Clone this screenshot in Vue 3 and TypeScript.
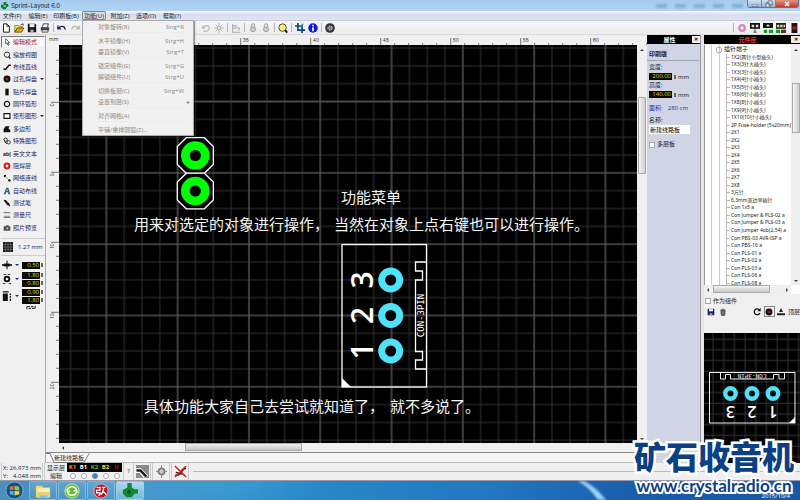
<script setup lang="ts">
import { ref } from 'vue'

interface MenuItem { label: string; width: string; open?: boolean }
interface DropItem { label: string; key?: string; sub?: boolean; group?: boolean }
interface Tool { label: string; icon: string; more?: boolean }

const icons: Record<string, string> = {
  pointer: '<path d="M4 1v8l2-2 1.500 4 1.500-.7L7.500 7H10z" fill="#fff" stroke="#222" stroke-width="1"/>',
  zoom: '<circle cx="6" cy="5.500" r="4" fill="#fff" stroke="#222" stroke-width="1.400"/><path d="M8.500 8.500 11 11.500" stroke="#222" stroke-width="2"/>',
  track: '<path d="M1.500 9.500H4L9 3.500h2" fill="none" stroke="#111" stroke-width="2.200" stroke-linecap="round"/>',
  via: '<circle cx="6" cy="6" r="5.200" fill="#111"/><circle cx="6" cy="6" r="2" fill="#a51c1c"/>',
  smd: '<path d="M3.500 1h5v10h-5z" fill="#111"/>',
  ring: '<circle cx="6" cy="6" r="4" fill="#fff" stroke="#111" stroke-width="1.900"/>',
  rect: '<path d="M1.500 2.500h9v7h-9z" fill="#fff" stroke="#111" stroke-width="1.700"/>',
  poly: '<path d="M1 6 4 2h6L8 5l3 3v3H1z" fill="#111"/>',
  special: '<circle cx="4" cy="4" r="2.500" fill="none" stroke="#222" stroke-width="1.500"/><circle cx="8.500" cy="8" r="2.500" fill="none" stroke="#222" stroke-width="1.300"/><path d="M2 7l4 3" stroke="#222" stroke-width="1.500"/>',
  text: '<text x="0" y="9" font-family="Liberation Sans, sans-serif" font-size="8" font-weight="700" fill="#111">ab|</text>',
  mask: '<circle cx="6" cy="6" r="3.600" fill="#fff" stroke="#e31515" stroke-width="3"/>',
  net: '<circle cx="3" cy="3" r="1.800"/><circle cx="9.500" cy="9.500" r="1.800"/><path d="M3 3l6.500 6.500" stroke="#777" stroke-width="1"/>',
  auto: '<path d="M1 11 5 1h3l3 10H8L7.500 8h-3L4 11zM5 6h2l-.7-3z" fill="#2f6183"/>',
  probe: '<path d="M1 1l3 .5 5 5 2 5-5-3-4-5z" fill="#111"/>',
  ruler: '<path d="M1 2.500h10M1 9.500h10M3 7v2M6 7v2M9 7v2" stroke="#555" stroke-width="1.300"/>',
  photo: '<path d="M1 3.500h2.500L5 2h3l1 1.500h2V10H1z" fill="#555"/><circle cx="6.500" cy="6.500" r="2" fill="#ccc" stroke="#333"/>',
  page: '<path d="M3 1h4l3 3v7H3z" fill="#fff" stroke="#222" stroke-width="1.200"/><path d="M7 1v3h3" fill="none" stroke="#222"/>',
  folder: '<path d="M1 3h4l1 1h4v2H4l-3 5z" fill="#ffe98a" stroke="#6a5a00" stroke-width=".8"/><path d="M4 6h8l-3 5H1z" fill="#e0b000" stroke="#3c3200" stroke-width=".8"/><path d="M8 2l3-1v2" fill="none" stroke="#222"/>',
  disk: '<path d="M1 1h9l1 1v9H1z" fill="#15151c"/><path d="M3 1h6v4H3z" fill="#e8e8ee"/><path d="M4 8h4v3H4z" fill="#aaa"/>',
  bluedisk: '<path d="M1 1h9l1 1v9H1z" fill="#1b1f72"/><path d="M3 1h6v4H3z" fill="#e8e8ee"/><path d="M4 8h4v3H4z" fill="#aab"/>',
  printer: '<path d="M3 5l1-4h6L9 5" fill="#fff" stroke="#222"/><path d="M1 5h10v4H1z" fill="#444"/><path d="M2.500 8h7v3h-7z" fill="#ddd" stroke="#222" stroke-width=".8"/>',
  undo: '<path d="M1 3v4h4M1.500 6.500C4 3 9 3 10 8" fill="none" stroke="#1c1c5a" stroke-width="1.500"/>',
  redo: '<path d="M11 3v4H7M10.500 6.500C8 3 3 3 2 8" fill="none" stroke="#bbb" stroke-width="1.500"/>',
  rotate: '<path d="M2 3v3h3M2.500 6C4 2 10 2 10 6s-5 5-7 3" fill="none" stroke="#bdbdbd" stroke-width="1.500"/>',
  burst: '<circle cx="6" cy="6" r="2.200" fill="none" stroke="#aaa" stroke-width="1.300"/><path d="M6 0v3M6 9v3M0 6h3M9 6h3M2 2l2 2M8 8l2 2M10 2 8 4M4 8l-2 2" stroke="#aaa"/>',
  align: '<path d="M2 1v10h9M2 3h4v3H2M7 6h3v3" fill="none" stroke="#aaa" stroke-width="1.300"/>',
  lock: '<path d="M4 5V3a2 2 0 0 1 4 0v2" fill="none" stroke="#aaa" stroke-width="1.400"/><circle cx="6" cy="7.500" r="3" fill="#ccc" stroke="#999"/>',
  find: '<circle cx="5.500" cy="5.500" r="4.500" fill="#ffee70" stroke="#333" stroke-width="1"/><path d="M8.500 8.500 11 11.500" stroke="#111" stroke-width="2.200"/>',
  crop: '<path d="M3.500 0v8.500H12M0 3.500h8.500V12" fill="none" stroke="#0b3f70" stroke-width="1.900"/><path d="M5 5l5-4" stroke="#18a0a0" stroke-width="1.500"/>',
  info: '<circle cx="6" cy="6" r="5.700" fill="#0c18d8"/><path d="M6 2v2M6 5v5" stroke="#fff" stroke-width="2"/>',
  disc: '<circle cx="6" cy="6" r="5.800" fill="#333"/><circle cx="6" cy="6" r="2.500" fill="#777" stroke="#ccc" stroke-width="1.300" stroke-dasharray="2 1"/>',
  pink: '<circle cx="6" cy="6" r="3.400" fill="#fff" stroke="#dd80bd" stroke-width="2.800"/>',
  pane1: '<path d="M0 0h12v7H0z" fill="#111"/><path d="M2 2h3v3H2zM7 2h3v3H7z" fill="#ddd"/><path d="M6 7v4M4 11h4" stroke="#333"/>',
  pane2: '<path d="M0 0h12v6H0z" fill="#111"/><path d="M4 3h4M6 1v4" stroke="#ddd"/><path d="M1 8h4v4H1zM7 8h5v4H7z" fill="#139a2b"/>',
  pane3: '<path d="M0 0h12v7H0z" fill="#222"/><path d="M1 2h3v3H1zM5 2h3v3H5zM9 2h2v3H9z" fill="#dcd28a"/><path d="M0 8h5v4H0z" fill="#139a2b"/><path d="M6 8h6v4H6z" fill="#7a2222"/>',
  pane4: '<path d="M3 0h7v12H3z" fill="#151515"/><path d="M4 4h5v4H4z" fill="#b0121b"/>',
  trash: '<path d="M2 3h8M5 1.500h2M3 4l.6 7h5L9 4z" fill="#777" stroke="#333" stroke-width="1.200"/>',
  turn: '<path d="M10 3a4.500 4.500 0 1 0 .5 4.500" fill="none" stroke="#111" stroke-width="1.900"/><path d="M11.500 0v5h-5z" fill="#111"/>',
  flip: '<path d="M6 0l3 6H3zM0 8h12v3H0z" fill="#222"/>',
  line: '<path d="M0 5h12v2H0z" fill="#111"/><path d="M6 1v10" stroke="#111" stroke-width="1.300" /><path d="M2.500 4.300h7v3.400h-7z" fill="#111"/>',
  padsize: '<circle cx="6" cy="6" r="2.800" fill="none" stroke="#111" stroke-width="2.300"/><path d="M2 .5h3M7 .5h3M1 11.500h3M8 11.500h3" stroke="#111" stroke-width="1"/>',
  smdsize: '<path d="M1 3h6v9H1z" fill="#111"/><path d="M1 1h7M10 3v2M10 6v2M10 9v3" stroke="#111" stroke-width="1.500"/>',
  grid: '<path d="M0 0h12v12H0z" fill="#1c1c1c"/><path d="M3 0v12M6 0v12M9 0v12M0 3h12M0 6h12M0 9h12" stroke="#777" stroke-width=".7"/>',
}

const menus: MenuItem[] = [
  { label: '文件(F)', width: 'm' }, { label: '编辑(E)', width: 'm' }, { label: '印刷板(B)', width: 'l' },
  { label: '功能(U)', width: 'm', open: true }, { label: '附加(Z)', width: 'm' }, { label: '选项(O)', width: 'm' }, { label: '帮助(?)', width: 'm' },
]
const drop: DropItem[] = [
  { label: '对象旋转(R)', key: 'Strg+R' },
  { label: '水平镜像(H)', key: 'Strg+H', group: true },
  { label: '垂直镜像(V)', key: 'Strg+T' },
  { label: '锁定组件(G)', key: 'Strg+G', group: true },
  { label: '解锁组件(U)', key: 'Strg+U' },
  { label: '切换板层(C)', key: 'Strg+W', group: true },
  { label: '设置到层(S)', sub: true },
  { label: '对齐网格(A)', group: true },
  { label: '平铺/重排圆弧(Z)...', group: true },
]
const barLeft = ['page', 'folder', 'disk', 'printer', '|', 'undo', 'redo']
const barMid = ['rotate', 'burst', '|', 'align', '|', 'lock', 'lock', '|', 'find', '|', 'crop', 'info', '|', 'disc']
const barRight = ['|', 'pink', 'pane1', 'pane2', 'pane3', 'pane4']
const tools: Tool[] = [
  { label: '编辑模式', icon: 'pointer' }, { label: '缩放视图', icon: 'zoom' }, { label: '布线直线', icon: 'track' },
  { label: '过孔焊盘', icon: 'via', more: true }, { label: '贴片焊盘', icon: 'smd' }, { label: '圆环弧形', icon: 'ring' },
  { label: '矩形图形', icon: 'rect', more: true }, { label: '多边形', icon: 'poly' }, { label: '特殊图形', icon: 'special' },
  { label: '英文文本', icon: 'text' }, { label: '阻焊层', icon: 'mask' }, { label: '网络连线', icon: 'net' },
  { label: '自动布线', icon: 'auto' }, { label: '测试笔', icon: 'probe' }, { label: '测量尺', icon: 'ruler' }, { label: '照片预览', icon: 'photo' },
]
const sizes = [
  { icon: 'line', name: '线宽', values: ['0.50'] },
  { icon: 'padsize', name: '焊盘', values: ['1.80', '0.80'] },
  { icon: 'smdsize', name: '贴片', values: ['0.90', '1.80'] },
]
const parts = [
  '1X2(两针小型插头)', '1X3(3针大插头)', '1X3(3针小插头)', '1X4(4针小插头)', '1X5(5针小插头)', '1X6(6针小插头)', '1X8(8针小插头)',
  '1X9(9针小插头)', '1X10(10针小插头)', '2P Fuse-holder (5x20mm)', '2X1', '2X2', '2X3', '2X4', '2X5', '2X6', '2X7', '2X8', '3方针',
  '6.3mm宽边单插针', 'Con 1x5 a', 'Con Jumper & PLS-02 a', 'Con Jumper & PLS-03 a', 'Con Jumper 4ob(2,54) a', 'Con PBS-03 AVR-ISP a',
  'Con PBS-16 a', 'Con PLS-01 a', 'Con PLS-02 a', 'Con PLS-03 a', 'Con PLS-06 a', 'Con PLS-08 a',
]
const layers = [
  { name: 'K1', color: '#ff8a1c' }, { name: 'B1', color: '#ffffff' }, { name: 'K2', color: '#21d63a' },
  { name: 'B2', color: '#f3e53a' }, { name: 'U', color: '#c01822' },
]
const activeLayer = ref('K2')
const boardWidth = ref('200.00')
const boardHeight = ref('140.00')
const boardName = ref('新建线路板')
// One ruler tick per millimetre; every fifth one carries a number.
const hTicks = Array.from({ length: 34 }, (_, i) => ({ x: 184.7 + i * 14, label: i % 5 === 4 ? String(31 + i) : '' }))
const vTicks = Array.from({ length: 28 }, (_, i) => ({ y: 60.3 + i * 14, label: i >= 3 && (i - 3) % 5 === 0 ? String(i - 3) : '' }))
const pads = [{ n: '3', y: 280 }, { n: '2', y: 315.5 }, { n: '1', y: 351 }]
const miniPads = [{ n: '3', x: 730.5 }, { n: '2', x: 752 }, { n: '1', x: 773 }]
</script>

<template>
  <div class="app">
    <header class="title">
      <svg class="logo" viewBox="0 0 12 12"><path d="M4 0h4v3h3v4H9l-2 4H3L0 8V4h4z" fill="#127a25" /><circle cx="5.5" cy="6" r="1.8" fill="#6ae07a" /></svg>
      <span>Sprint-Layout 6.0</span>
      <span class="ghosts"><i></i><i></i><i></i><i></i><i></i></span>
      <div class="winbtns">
        <button aria-label="最小化"><svg viewBox="0 0 12 8"><path d="M3 5h6v1.500H3z" fill="#fff" stroke="#456" stroke-width=".6" /></svg></button>
        <button aria-label="还原"><svg viewBox="0 0 12 8"><path d="M5 1h4v4H5zM3 3h4v4H3z" fill="#fff" stroke="#456" stroke-width=".8" /></svg></button>
        <button class="close" aria-label="关闭"><svg viewBox="0 0 12 8"><path d="M4 2l4 4M8 2 4 6" stroke="#fff" stroke-width="1.5" /></svg></button>
      </div>
    </header>

    <nav class="menubar">
      <div v-for="m in menus" :key="m.label" class="menuslot" :class="m.width">
        <button class="menu" :class="{ open: m.open }">{{ m.label }}</button>
        <div v-if="m.open" class="drop">
          <button v-for="d in drop" :key="d.label" disabled class="dropitem" :class="{ group: d.group }">
            <span>{{ d.label }}</span><span v-if="d.key" class="key">{{ d.key }}</span><span v-if="d.sub" class="sub">▸</span>
          </button>
        </div>
      </div>
    </nav>

    <div class="toolbar">
      <div class="group-left">
        <template v-for="(n, i) in barLeft" :key="i"><i v-if="n === '|'" class="sep"></i><button v-else :aria-label="n"><svg viewBox="0 0 12 12" v-html="icons[n]" /></button></template>
      </div>
      <div class="group-mid">
        <template v-for="(n, i) in barMid" :key="i"><i v-if="n === '|'" class="sep"></i><button v-else :aria-label="n"><svg viewBox="0 0 12 12" v-html="icons[n]" /></button></template>
      </div>
      <div class="group-right">
        <template v-for="(n, i) in barRight" :key="i"><i v-if="n === '|'" class="sep"></i><button v-else :aria-label="n"><svg viewBox="0 0 12 12" v-html="icons[n]" /></button></template>
      </div>
    </div>

    <main class="main">
      <aside class="left">
        <div class="tools">
          <button v-for="(t, i) in tools" :key="t.label" class="tool" :class="{ active: i === 0 }">
            <svg viewBox="0 0 12 12" v-html="icons[t.icon]" /><span>{{ t.label }}</span><i v-if="t.more" class="caret"></i>
          </button>
        </div>
        <button class="gridsize"><svg viewBox="0 0 12 12" v-html="icons.grid" /><span>1.27 mm</span></button>
        <div class="sizes">
          <div v-for="s in sizes" :key="s.name" class="size">
            <svg viewBox="0 0 12 12" v-html="icons[s.icon]" /><i class="caret blue"></i>
            <div class="vals"><label v-for="(v, i) in s.values" :key="i"><input type="text" :value="v" :aria-label="s.name + (i + 1)" /><i class="spin"></i></label></div>
          </div>
          <svg class="swap" viewBox="0 0 12 6"><path d="M1 5V2h4M7 4h4V1M3 4h3M6 2h3" fill="none" stroke="#222" stroke-width="1.2" /></svg>
        </div>
      </aside>

      <section class="board">
        <div class="work">
          <span class="unit">mm</span>
          <svg class="hruler">
            <g transform="translate(-59 -35)" stroke="#777">
              <path v-for="t in hTicks" :key="t.x" :d="`M${t.x} ${t.label ? 38 : 43}V45`" />
            </g>
            <g transform="translate(-59 -35)" font-size="5" fill="#333">
              <text v-for="t in hTicks" :key="t.x" :x="t.x + 2" y="42">{{ t.label }}</text>
            </g>
          </svg>
          <svg class="vruler">
            <g transform="translate(-46 -45)" stroke="#777">
              <path v-for="t in vTicks" :key="t.y" :d="`M${t.label ? 51 : 56} ${t.y}H59`" />
            </g>
            <g transform="translate(-46 -45)" font-size="5" fill="#333">
              <text v-for="t in vTicks" :key="t.y" text-anchor="end" :transform="`translate(54 ${t.y + 1}) rotate(-90)`">{{ t.label }}</text>
            </g>
          </svg>
          <svg class="canvas">
            <defs>
              <pattern id="minor" x="2.8" y="12" width="17.825" height="17.825" patternUnits="userSpaceOnUse"><path d="M8.900 0V17.825M0 8.900H17.825" stroke="#323232" fill="none" /></pattern>
              <pattern id="major" x="11.7" y="20.9" width="71.3" height="71.3" patternUnits="userSpaceOnUse"><path d="M35.650 0V71.300M0 35.650H71.300" stroke="#5c5c5c" fill="none" /></pattern>
            </defs>
            <rect width="100%" height="100%" fill="#000" />
            <rect width="100%" height="100%" fill="url(#minor)" />
            <rect width="100%" height="100%" fill="url(#major)" />
            <path d="M0 56.500H3000" stroke="#a02c30" stroke-width="1" />
            <g transform="translate(-59 -45)">
              <g v-for="y in [155.5, 191]" :key="y" :transform="`translate(195.3 ${y})`">
                <path d="M-9-17.800H9L18-9V9L9 17.800H-9L-18 9V-9z" fill="#000" stroke="#fff" stroke-width="1.3" />
                <circle r="14.3" fill="#0f0" /><circle r="5.6" fill="#000" />
              </g>
              <g fill="none" stroke="#fff" stroke-width="1.3">
                <rect x="342" y="244.5" width="84.5" height="142.5" />
                <path d="M426.500 262H415.500V271H422.500V280H415.500V351.500H422.500V360H415.500V369H426.500" />
              </g>
              <path d="M342 378l9 9h-9z" fill="#fff" />
              <g v-for="p in pads" :key="p.n">
                <circle cx="390.7" :cy="p.y" r="9" fill="#000" stroke="#4fe3fb" stroke-width="7" />
                <text class="padno" text-anchor="middle" :transform="`translate(373 ${p.y}) rotate(-90)`">{{ p.n }}</text>
              </g>
              <text class="partname" text-anchor="middle" transform="translate(424 315.5) rotate(-90)">CON-3PIN</text>
              <g class="caption">
                <text x="341" y="203">功能菜单</text>
                <text y="230"><tspan x="134">用来对选定的对象进行操作，</tspan><tspan x="334">当然在对象上点右键也可以进行操作。</tspan></text>
                <text y="412"><tspan x="144">具体功能大家自己去尝试就知道了，</tspan><tspan x="390">就不多说了。</tspan></text>
              </g>
            </g>
          </svg>
          <div class="vscroll"><i class="tri up"></i><b></b><i class="tri down"></i></div>
          <div class="hscroll"><i class="tri left-tri"></i><b></b></div>
        </div>
        <div class="tabs"><svg viewBox="0 0 48 10"><path d="M0 .5H4L8 9.500H38L43 .5" fill="#fafafa" stroke="#777" stroke-width="1" /></svg><button>新建线路板</button></div>
      </section>

      <aside class="props">
        <div class="head"><span>属性</span><button aria-label="关闭属性">✕</button></div>
        <h2>印刷版</h2>
        <div class="fields">
          <label for="bw">宽度:</label>
          <div class="num"><input id="bw" v-model="boardWidth" type="text" /><i class="spin"></i><span>mm</span></div>
          <label for="bh">高度:</label>
          <div class="num"><input id="bh" v-model="boardHeight" type="text" /><i class="spin"></i><span>mm</span></div>
          <p class="area"><span>面积:</span><span>280 cm</span></p>
          <label for="bn">名称:</label>
          <input id="bn" v-model="boardName" class="name" type="text" />
          <label class="check"><input type="checkbox" /><span>多层板</span></label>
        </div>
      </aside>

      <aside class="lib">
        <div class="head red"><span>元件库</span><button aria-label="关闭元件库">✕</button></div>
        <div class="treebox">
          <div class="tree">
            <ul><li class="root">插针端子</li><li v-for="(p, i) in parts" :key="i">{{ p }}</li></ul>
          </div>
          <div class="treev"><i class="tri up"></i><b></b><i class="tri down"></i></div>
          <div class="treeh"><i class="tri left-tri"></i><b></b><i class="tri right-tri"></i></div>
        </div>
        <label class="check"><input type="checkbox" /><span>作为组件</span></label>
        <div class="libtools">
          <button aria-label="保存"><svg viewBox="0 0 12 12" v-html="icons.bluedisk" /></button>
          <button aria-label="删除"><svg viewBox="0 0 12 12" v-html="icons.trash" /></button>
          <i class="grow"></i>
          <button aria-label="旋转"><svg viewBox="0 0 12 12" v-html="icons.turn" /></button>
          <button aria-label="焊盘" class="on"><svg viewBox="0 0 12 12" v-html="icons.via" /></button>
          <button aria-label="翻转"><svg viewBox="0 0 12 12" v-html="icons.flip" /></button>
          <span>顶层</span>
        </div>
        <svg class="preview">
          <defs><pattern id="pgrid" x="4" y="1" width="10.7" height="10.7" patternUnits="userSpaceOnUse"><path d="M5 0V10.700M0 5H10.700" stroke="#353535" fill="none" /></pattern></defs>
          <rect width="100%" height="100%" fill="#000" /><rect width="100%" height="100%" fill="url(#pgrid)" />
          <g transform="translate(-704 -333)">
            <g fill="none" stroke="#eee"><rect x="709.5" y="372.5" width="85.5" height="50.5" /><path d="M720.500 372.500V379H725.500V374.500H730.500V379H773.500V374.500H779V379H784.500V372.500" /></g>
            <path d="M795 417v6h-6z" fill="#fff" />
            <g v-for="p in miniPads" :key="p.n">
              <circle :cx="p.x" cy="393.5" r="5.2" fill="#000" stroke="#4fe3fb" stroke-width="4.4" />
              <text class="minino" text-anchor="middle" :transform="`translate(${p.x} 405.5) rotate(180)`">{{ p.n }}</text>
            </g>
            <text class="mininame" text-anchor="middle" transform="translate(752 373.5) rotate(180)">CON-3PIN</text>
          </g>
        </svg>
      </aside>
    </main>

    <footer class="status">
      <div class="coords"><span>X:</span><span>26.973 mm</span><span>Y:</span><span>4.048 mm</span></div>
      <div class="layers">
        <span>显示层</span><b v-for="l in layers" :key="l.name" :style="{ color: l.color }">{{ l.name }}</b>
        <span>编辑</span><input v-for="l in layers" :key="l.name" v-model="activeLayer" type="radio" name="layer" :value="l.name" :aria-label="l.name" />
      </div>
      <span class="q">?</span>
      <button aria-label="橡皮筋"><svg viewBox="0 0 14 14"><path d="M0 0h14v14H0z" fill="#8a8a8a" /><path d="M0 4h5l8 8M0 8h4l5 6" fill="none" stroke="#fff" stroke-width="1.2" /><path d="M1 6h4l6 6" fill="none" stroke="#111" stroke-width="2.2" /></svg></button>
      <button aria-label="捕捉"><svg viewBox="0 0 14 14"><circle cx="7" cy="7" r="3.3" fill="#ccc" stroke="#777" stroke-width="1.8" /><path d="M7 0v4M7 10v4M1 7h3M10 7h3" stroke="#888" /></svg></button>
      <button aria-label="连线关闭"><svg viewBox="0 0 14 14"><path d="M1 11h4l6-7h2M2 8l8 2" fill="none" stroke="#222" stroke-width="1.4" /><path d="M1 1l12 12M13 1 1 13" stroke="#d11f1f" stroke-width="1.6" /></svg></button>
      <i class="hint"></i>
    </footer>

    <div class="taskbar">
      <button class="start" aria-label="开始"><svg viewBox="0 0 20 20"><circle cx="10" cy="10" r="9" fill="#174e80" stroke="#77b4dc" /><path d="M5 6l4-1v4.500H5z" fill="#e9652c" /><path d="M10 5l5 1v4l-5-.5z" fill="#8bc63f" /><path d="M5 10.500h4V15l-4-1z" fill="#48b3ea" /><path d="M10 10.500l5 .2V14l-5 1.200z" fill="#ffd13b" /></svg></button>
      <button class="task" aria-label="文件夹"><svg viewBox="0 0 20 18"><path d="M2 3h7l1 2h8v11H2z" fill="#f3d774" /><path d="M4 6h13v8H4z" fill="#fdf3b8" /><path d="M3 10h15l-1 7H4z" fill="#ecd07a" /><path d="M6 14h9v3H6z" fill="#7fc4e8" /></svg></button>
      <button class="task" aria-label="浏览器"><svg viewBox="0 0 20 18"><circle cx="10" cy="9" r="8" fill="#67bd2c" stroke="#c8efa6" /><path d="M5 8c1-5 9-5 10 0M15 10c-1 5-9 5-10 0M4 7l1 3 3-1M16 11l-1-3-3 1" fill="none" stroke="#fff" stroke-width="1.7" /></svg></button>
      <button class="task" aria-label="词典"><svg viewBox="0 0 20 18"><circle cx="10" cy="9" r="8" fill="#b81426" stroke="#f0b6bc" /><path d="M5 5h4v3H5v3h4q0 3-2 3M11 5h4M13 5q0 5-3 8M12 9l4 4" fill="none" stroke="#fff" stroke-width="1.4" /></svg></button>
      <button class="task active" aria-label="Sprint-Layout"><svg viewBox="0 0 20 18"><path d="M7 0h5v5l3 2h4v5h-4l-3 4H6l-4-4V8l5-3z" fill="#128a2c" /><circle cx="9" cy="10" r="2.2" fill="#0a5418" /></svg></button>
      <svg class="beam" viewBox="0 0 60 19"><path d="M2 0Q14 7 22 19H30Q20 6 8 0z" fill="#9fd0f5" /></svg>
      <time>2015/10/4</time>
    </div>

    <div class="mark"><strong>矿石收音机</strong><a href="#">www.crystalradio.cn</a></div>
  </div>
</template>

<style>
body { margin: 0; }
</style>

<style scoped>
.app { position: relative; display: flex; flex-direction: column; height: 100vh; min-height: 440px; overflow: hidden; background: #f0f0f0; color: #222; font: 6px/8px "Open Sans", "Noto Sans CJK SC", sans-serif; }
.app * { box-sizing: border-box; }
button { display: flex; align-items: center; justify-content: center; padding: 0; border: 0; background: none; color: inherit; font: inherit; white-space: nowrap; }
input { margin: 0; padding: 0; border: 0; font: inherit; min-width: 0; }
i { font-style: normal; }
svg { display: block; flex: none; }
.tri { width: 0; height: 0; border: 2px solid transparent; align-self: center; justify-self: center; }
.tri.up { border-bottom-color: #444; border-top: 0; }
.tri.down { border-top-color: #444; border-bottom: 0; }
.left-tri { border-right-color: #444; border-left: 0; }
.right-tri { border-left-color: #444; border-right: 0; }

.title { display: flex; align-items: center; gap: 2px; flex: none; height: 11px; padding-left: 1px; background: linear-gradient(#a5caee, #b0d4f3); color: #123; }
.title > span:nth-child(2) { font-family: Inter, sans-serif; }
.logo { width: 8px; height: 8px; }
.ghosts { display: flex; gap: 8px; margin-left: auto; margin-right: 2px; filter: blur(1px); }
.ghosts i { width: 11px; height: 4px; background: #7b9cbc; opacity: .65; }
.winbtns { display: flex; align-self: flex-start; margin-right: 1px; height: 8px; border: 1px solid #5c7894; border-top: 0; border-radius: 0 0 3px 3px; overflow: hidden; }
.winbtns button { width: 14px; background: linear-gradient(#cfe2f4, #94b3d2); border-right: 1px solid #6d88a3; }
.winbtns .close { width: 22px; background: linear-gradient(#e59383, #c2392a); border: 0; }
.winbtns svg { width: 12px; height: 8px; }

.menubar { display: flex; gap: 2px; flex: none; height: 10px; background: linear-gradient(#fdfdfe, #d7dded 40%, #dfe5f2); border-bottom: 1px solid #c5cbd9; }
.menuslot { position: relative; display: flex; }
.m { width: 24px; }
.l { width: 28px; }
.menu { flex: 1; border: 1px solid transparent; }
.menu.open { border-color: #7c8798; border-radius: 1px; background: #d6deec; }
.drop { position: absolute; z-index: 5; top: 9px; left: 0; width: 112px; padding: 0 9px 0 15px; background: #f1f1f1; border: 1px solid #aaa; box-shadow: 1px 1px 1px #0006; color: #8b8b8b; }
.dropitem { display: flex; justify-content: space-between; width: 100%; height: 11px; }
.dropitem.group { height: 14px; padding-top: 3px; border-top: 1px solid #ececec; }
.dropitem .sub { margin-right: -6px; }

.toolbar { display: grid; grid-template-columns: 200px 1fr auto; flex: none; height: 14px; background: linear-gradient(#f5f6f8, #ececec); border-bottom: 1px solid #dadada; }
.toolbar > div { display: flex; align-items: center; gap: 1px; }
.toolbar button { width: 12px; height: 12px; }
.toolbar svg { width: 10px; height: 10px; }
.sep { width: 1px; height: 9px; margin: 0 1px; background: #b5b5b5; }

.main { display: flex; flex: 1; min-height: 0; }
.left { display: flex; flex-direction: column; width: 46px; flex: none; padding: 1px 1px 0; }
.tools { display: grid; grid-auto-rows: 1fr; height: 198px; }
.tool { justify-content: flex-start; gap: 2px; padding-left: 1px; border: 1px solid transparent; color: #29295c; }
.tool.active { border-color: #777 #eee #eee #777; background: #f8f8f8; color: #a01212; }
.tool svg { width: 8px; height: 8px; }
.tool span { width: 25px; text-align: left; }
.caret { width: 0; height: 0; border: 2px solid transparent; border-top-color: #222; border-bottom: 0; }
.caret.blue { border-top-color: #2222a0; }
.gridsize { justify-content: flex-start; gap: 5px; height: 18px; margin-top: 4px; padding-left: 2px; border-top: 1px solid #ccc; border-bottom: 1px solid #ccc; }
.gridsize svg { width: 10px; height: 10px; }
.sizes { display: flex; flex-direction: column; gap: 1px; padding: 4px 1px 0; }
.size { display: grid; grid-template-columns: 10px 4px 1fr; gap: 3px; align-items: center; min-height: 10px; }
.size svg { width: 10px; height: 10px; }
.vals label { display: flex; align-items: center; gap: 1px; height: 8px; }
.vals input, .num input { width: 18px; height: 7px; padding-right: 1px; background: #0a0a04; color: #d9d93c; text-align: right; line-height: 7px; }
.spin { width: 2px; height: 4px; background: #666; }
.swap { width: 10px; height: 5px; margin-left: 24px; }

.board { display: flex; flex-direction: column; flex: 1; min-width: 0; border-left: 1px solid #aaa; margin-left: -1px; }
.work { display: grid; flex: 1; min-height: 0; grid-template: 10px minmax(0, 1fr) 9px / 13px minmax(0, 1fr) 10px; border-bottom: 1px solid #888; background: #f0f0f0; }
.unit { line-height: 9px; padding-left: 3px; font-size: 5px; }
.hruler { grid-column: 2 / 4; width: 100%; height: 10px; font-family: Inter, sans-serif; }
.vruler { grid-row: 2 / 4; width: 13px; height: 100%; font-family: Inter, sans-serif; }
.canvas { width: 100%; height: 100%; min-height: 0; }
.caption { font: 15px "Noto Sans CJK SC", sans-serif; fill: #f6f6f6; }
.padno { font: 600 30px "Open Sans", sans-serif; fill: #fff; }
.partname { font: 9px "DejaVu Sans Mono", monospace; fill: #fff; }
.vscroll, .treev { display: grid; grid-template-rows: 9px 1fr 9px; justify-items: center; background: #efefef; }
.vscroll b { width: 8px; height: 77px; margin-top: 43px; border: 1px solid #a8a8a8; border-radius: 1px; background: linear-gradient(90deg, #f6f6f6, #cfcfcf); }
.hscroll { grid-column: 2 / 4; display: flex; padding-left: 3px; background: #f0f0f0; }
.hscroll b { width: 117px; height: 8px; margin-left: 121px; border: 1px solid #aaa; background: linear-gradient(#f2f2f2, #c6c6c6); }
.tabs { display: grid; flex: none; height: 10px; background: #f6f6f6; border-bottom: 1px solid #bbb; justify-items: start; }
.tabs > * { grid-area: 1 / 1; }
.tabs svg { width: 48px; height: 10px; }
.tabs button { height: 9px; margin-left: 8px; }

.props { width: 54px; flex: none; background: #d0d4e5; border-right: 1px solid #999; }
.head { display: grid; grid-template-columns: 1fr 8px; align-items: center; height: 9px; flex: none; background: #000; color: #fff; font-weight: 600; text-align: center; }
.head button { height: 7px; background: #eee; color: #000; font-size: 5px; line-height: 7px; }
.head.red { color: #e8323b; grid-template-columns: 1fr 9px; }
.props h2 { margin: 5px 1px 2px 0; padding: 0 2px 1px; border-bottom: 1px solid #9aa; font-size: 6px; line-height: 10px; font-weight: 700; }
.fields { display: flex; flex-direction: column; padding: 0 2px; }
.fields > label { height: 9px; line-height: 9px; }
.num { display: flex; align-items: center; gap: 2px; height: 9px; }
.num input { width: 23px; }
.area { display: flex; justify-content: space-between; margin: 5px 10px 4px 0; color: #2b2b9c; line-height: 8px; }
.name { width: 41px; height: 9px; padding-left: 1px; background: #fff; }
.check { display: flex; align-items: center; gap: 2px; }
.check input { appearance: none; width: 6px; height: 6px; border: 1px solid #a8a8a8; background: #fafafa; }
.fields > .check { margin-top: 6px; }

.lib { display: flex; flex-direction: column; width: 99px; flex: none; border-left: 3px solid #e4e4ea; }
.treebox { display: grid; flex: 1; min-height: 0; grid-template: minmax(0, 1fr) 9px / minmax(0, 1fr) 9px; margin-top: 1px; background: #fff; }
.tree { overflow: hidden; border-left: 1px solid #999; background: linear-gradient(90deg, transparent 6px, #ccc 6px 7px, transparent 7px 14px, #ccc 14px 15px, transparent 15px); }
.tree ul { display: grid; grid-auto-rows: 1fr; height: calc(100% + 2px); margin: 0; padding: 1px 0 0; list-style: none; font-family: "Noto Sans", "Noto Sans CJK SC", sans-serif; font-size: 5px; }
.tree li { display: flex; align-items: center; margin-left: 21px; border-left: 1px solid #bbb; white-space: nowrap; min-height: 0; line-height: 7px; }
.tree li::before { content: ""; width: 3px; margin-right: 1px; border-top: 1px solid #bbb; }
.tree .root { margin-left: 11px; border: 0; font-size: 6px; }
.tree .root::before { width: 4px; height: 4px; border: 1px solid #aaa; border-radius: 2px; margin-right: 2px; }
.treev b { width: 8px; height: 50px; margin-top: 29px; border: 1px solid #aaa; background: linear-gradient(90deg, #f4f4f4, #ccc); }
.treeh { display: flex; justify-content: space-between; background: #efefef; padding: 0 3px; }
.treeh b { width: 57px; height: 8px; margin-right: 12px; border: 1px solid #aaa; background: linear-gradient(#f4f4f4, #c8c8c8); }
.lib > .check { flex: none; height: 10px; margin-top: 2px; padding-left: 1px; }
.libtools { display: flex; align-items: center; gap: 1px; flex: none; height: 11px; padding-left: 1px; }
.libtools button { width: 11px; height: 11px; }
.libtools .on { border: 1px solid #888; }
.libtools svg { width: 8px; height: 8px; }
.grow { flex: 1; }
.preview { width: 100%; height: 130px; margin-top: 16px; }
.minino { font: 600 16px "Open Sans", sans-serif; fill: #fff; }
.mininame { font: 6px "DejaVu Sans Mono", monospace; fill: #eee; }

.status { display: flex; align-items: stretch; gap: 1px; flex: none; height: 18px; padding-left: 1px; background: #efefef; border-bottom: 1px solid #99a; }
.status > div, .status > button { border: 1px solid #ccc; border-width: 0 1px; }
.coords { display: grid; grid-template-columns: auto 1fr; align-content: center; width: 42px; padding: 0 1px; text-align: right; white-space: nowrap; }
.layers { display: grid; grid-template: 9px 8px / 22px repeat(5, 11px); align-items: center; justify-items: center; width: 80px; }
.layers b { width: 100%; height: 9px; background: #000; text-align: center; line-height: 9px; }
.layers input { appearance: none; width: 6px; height: 6px; border: 1px solid #aaa; border-radius: 50%; background: #fff; }
.layers input:checked { background: #2e86bd; border-color: #6b8ba0; }
.q { width: 7px; text-align: center; line-height: 17px; }
.status > button { width: 18px; }
.status button svg { width: 13px; height: 13px; }
.hint { flex: 1; align-self: center; height: 1px; margin-left: 3px; background: #bbb; }

.taskbar { position: relative; display: flex; align-items: stretch; gap: 1px; flex: none; height: 19px; background: radial-gradient(ellipse 90px 30px at 230px 0, #4ab1dc55, transparent), linear-gradient(90deg, #4b8dbb, #4699cb 18%, #2b8acb 36%, #2276c0 62%, #1a5cab 80%, #1757a5); }
.start { width: 28px; }
.start svg { width: 19px; height: 19px; }
.task { width: 28px; border: 1px solid #a5d0ea88; border-radius: 2px; background: linear-gradient(#8cc1e066, #5a9fce44); }
.task.active { background: linear-gradient(#cfeaf6cc, #8fcbe699); }
.task svg { width: 18px; height: 16px; }
.beam { position: absolute; left: 72%; top: 0; width: 60px; height: 19px; filter: blur(1px); }
.taskbar time { align-self: flex-end; margin-left: auto; margin-right: 10px; color: #fff; }

.mark { position: absolute; right: 6px; bottom: 0; display: flex; flex-direction: column; align-items: center; color: #0c3f83; white-space: nowrap; }
.mark strong { font: 900 32px/34px "Noto Sans CJK SC", sans-serif; -webkit-text-stroke: 5px #fff; paint-order: stroke fill; }
.mark a { font: 700 17px/28px Lato, sans-serif; color: inherit; text-decoration: none; -webkit-text-stroke: 4px #fff; paint-order: stroke fill; }
</style>
